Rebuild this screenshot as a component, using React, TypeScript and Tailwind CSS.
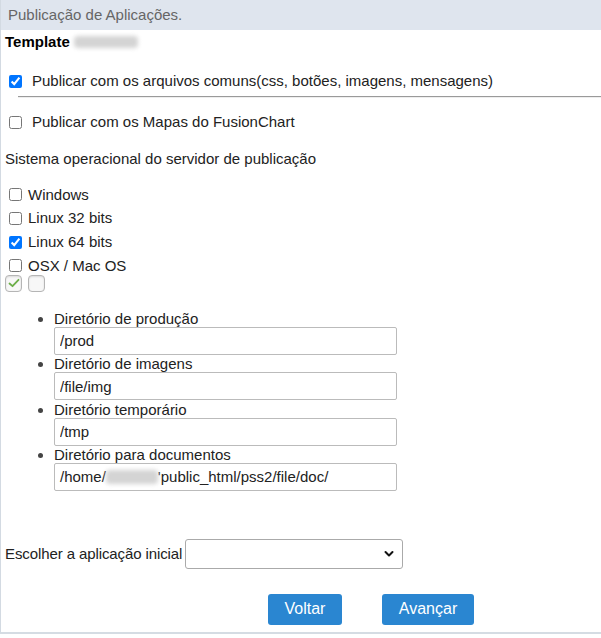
import { useState } from "react";

const sistemas = [
  { id: "win", label: "Windows", checked: false },
  { id: "l32", label: "Linux 32 bits", checked: false },
  { id: "l64", label: "Linux 64 bits", checked: true },
  { id: "osx", label: "OSX / Mac OS", checked: false }
] as const;

const diretorios = [
  { label: "Diretório de produção", value: "/prod" },
  { label: "Diretório de imagens", value: "/file/img" },
  { label: "Diretório temporário", value: "/tmp" }
];

function Blur({ className }: { className: string }) {
  return <span className={`inline-block rounded-sm bg-[#d4d4d4] blur-[2px] ${className}`} />;
}

export default function App() {
  const [app, setApp] = useState("");

  return (
    <div className="h-[638px] w-[601px] bg-white font-['Liberation_Sans',Arial,sans-serif] text-[15px] text-[#222]">
      <div className="h-[634px] border-b-2 border-l border-b-[#d5dce3] border-l-[#d3dae2]">
        <div className="flex h-[30px] items-center bg-[#dfe5ee] px-[7px] text-[15px] text-[#666]">
          Publicação de Aplicações.
        </div>

        <div className="flex h-[24px] items-center px-[4px] text-[15px] font-bold text-black">
          Template
          <Blur className="ml-[4px] h-[12px] w-[64px]" />
        </div>

        <label className="mt-[15px] flex h-[24px] items-center">
          <input type="checkbox" defaultChecked className="ml-[8px] mr-[10px] h-[13px] w-[13px]" />
          Publicar com os arquivos comuns(css, botões, imagens, mensagens)
        </label>
        <div className="ml-[17px] mt-[3px] border-t border-b border-t-[#9a9a9a] border-b-[#eee]" />

        <label className="mt-[12px] flex h-[24px] items-center">
          <input type="checkbox" className="ml-[8px] mr-[10px] h-[13px] w-[13px]" />
          Publicar com os Mapas do FusionChart
        </label>

        <div className="mt-[13px] flex h-[24px] items-center px-[4px]">
          Sistema operacional do servidor de publicação
        </div>

        <div className="mt-[12px] flex flex-col">
          {sistemas.map((s) => (
            <label key={s.id} className="flex h-[23.7px] items-center">
              <input
                type="checkbox"
                defaultChecked={s.checked}
                className="ml-[8px] mr-[6px] h-[13px] w-[13px]"
              />
              {s.label}
            </label>
          ))}
        </div>

        <div className="ml-[4px] mt-[-3px] flex gap-[6px]">
          <span className="flex h-[17px] w-[17px] items-center justify-center rounded-[4px] border border-[#b5b5b5] bg-[#f7f7f7] shadow-[inset_0_1px_2px_rgba(0,0,0,0.12)]">
            <svg width="12" height="10" viewBox="0 0 12 10" fill="none">
              <path d="M1.5 5.5 L4.5 8.2 L10.5 1.8" stroke="#6cae48" strokeWidth="1.8" strokeLinecap="round" strokeLinejoin="round" />
            </svg>
          </span>
          <span className="h-[17px] w-[17px] rounded-[4px] border border-[#b5b5b5] bg-[#f7f7f7] shadow-[inset_0_1px_2px_rgba(0,0,0,0.12)]" />
        </div>

        <ul className="ml-[53px] mt-[16px] list-disc pl-0 marker:text-[#444]">
          {diretorios.map((d) => (
            <li key={d.label} className="h-[45.5px]">
              <div className="h-[17px] leading-[17px]">{d.label}</div>
              <input
                readOnly
                value={d.value}
                className="h-[28px] w-[343px] rounded-[2px] border border-[#bbb] px-[5px] text-[15px] text-[#222] outline-none"
              />
            </li>
          ))}
          <li className="h-[45.5px]">
            <div className="h-[17px] leading-[17px]">Diretório para documentos</div>
            <div className="flex h-[28px] w-[343px] items-center rounded-[2px] border border-[#bbb] px-[5px]">
              /home/
              <Blur className="h-[14px] w-[52px]" />
              'public_html/pss2/file/doc/
            </div>
          </li>
        </ul>

        <div className="mt-[49px] flex items-center px-[4px]">
          <span className="mr-[3px] tracking-[-0.1px]">Escolher a aplicação inicial</span>
          <div className="relative h-[30px] w-[218px]">
            <select
              value={app}
              onChange={(e) => setApp(e.target.value)}
              className="h-full w-full appearance-none rounded-[3px] border border-[#aaa] bg-white px-[5px] text-[15px]"
            >
              <option value=""></option>
            </select>
            <svg className="pointer-events-none absolute right-[9px] top-[11px]" width="10" height="8" viewBox="0 0 10 8" fill="none">
              <path d="M1.5 2 L5 5.5 L8.5 2" stroke="#111" strokeWidth="2" strokeLinecap="round" strokeLinejoin="round" />
            </svg>
          </div>
        </div>

        <div className="ml-[267px] mt-[25px] flex gap-[40px]">
          <button className="h-[31px] w-[74px] rounded-[3px] bg-[#2a86d1] text-[16px] text-white">Voltar</button>
          <button className="h-[31px] w-[92px] rounded-[3px] bg-[#2a86d1] text-[16px] text-white">Avançar</button>
        </div>
      </div>
    </div>
  );
}
